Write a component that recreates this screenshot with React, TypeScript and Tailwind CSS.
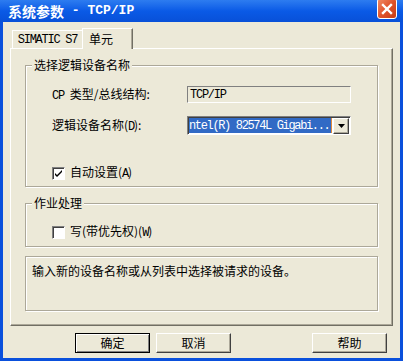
import React from 'react';

const CJK = '"Noto Sans CJK SC", "Liberation Sans", sans-serif';

// SimSun 的半角西文大约 6px 一个字
function M({ children, className = '' }: { children: React.ReactNode; className?: string }) {
  return (
    <span
      className={`text-[12px] tracking-[-1.25px] ${className}`}
      style={{ fontFamily: '"Liberation Mono", monospace' }}
    >
      {children}
    </span>
  );
}

function GroupBox({ title, className = '', children }: { title: string; className?: string; children?: React.ReactNode }) {
  return (
    <div
      className={`relative border border-[#aca899] shadow-[inset_1px_1px_0_#ffffff,1px_1px_0_#ffffff] ${className}`}
    >
      <span className="absolute -top-[9px] left-[6px] bg-[#ece9d8] px-[2px] text-[12px] leading-[16px] text-black">
        {title}
      </span>
      {children}
    </div>
  );
}

function CheckBox({ checked }: { checked?: boolean }) {
  return (
    <span className="flex h-[13px] w-[13px] items-center justify-center border border-t-[#808080] border-l-[#808080] border-r-[#ffffff] border-b-[#ffffff] bg-white shadow-[inset_1px_1px_0_#404040]">
      {checked && (
        <svg width="9" height="9" viewBox="0 0 9 9">
          <path d="M1 4 L3 6 L8 1 L8 3 L3 8 L1 6 Z" fill="#000" />
        </svg>
      )}
    </span>
  );
}

function Button({ children, isDefault }: { children: React.ReactNode; isDefault?: boolean }) {
  return (
    <div
      className={`flex h-[20px] w-[75px] items-center justify-center border text-[12px] text-black ${
        isDefault
          ? 'border-[#000000] shadow-[inset_1px_1px_0_#ffffff,inset_-1px_-1px_0_#808080]'
          : 'border-t-[#ffffff] border-l-[#ffffff] border-r-[#404040] border-b-[#404040] shadow-[inset_-1px_-1px_0_#aca899]'
      } bg-[#ece9d8]`}
    >
      {children}
    </div>
  );
}

export default function App() {
  return (
    <div className="h-[361px] w-[409px] overflow-hidden bg-white" style={{ fontFamily: CJK }}>
      <div className="flex h-[361px] w-[403px] flex-col bg-[#0a50dc]">
        {/* 标题栏 */}
        <div className="flex h-[22px] items-start bg-gradient-to-b from-[#2d7cf0] via-[#0a5ae6] to-[#0850d8] pl-[8px] pr-[6px]">
          <div className="flex h-[22px] flex-1 items-center whitespace-pre text-[14px] font-bold text-white">
            系统参数
            <span className="text-[13px]" style={{ fontFamily: '"Liberation Mono", monospace' }}>
              {' - TCP/IP'}
            </span>
          </div>
          <div className="-mt-[2px] flex h-[21px] w-[20px] items-center justify-center rounded-[3px] border border-white bg-gradient-to-br from-[#f08a64] via-[#e0532b] to-[#c83c14]">
            <svg width="12" height="12" viewBox="0 0 12 12">
              <path d="M2 2 L10 10 M10 2 L2 10" stroke="#fff" strokeWidth="2.4" strokeLinecap="square" />
            </svg>
          </div>
        </div>

        {/* 窗口内容 */}
        <div className="mx-[3px] mb-[3px] flex flex-1 flex-col bg-[#ece9d8] px-[7px]">
          {/* 选项卡 */}
          <div className="flex h-[26px] items-end pt-[6px] pl-[2px]">
            <div className="mb-0 flex h-[18px] w-[70px] items-center justify-center border-t border-l border-t-white border-l-white text-black">
              <M>SIMATIC S7</M>
            </div>
            <div className="relative z-10 -mb-[1px] flex h-[21px] w-[51px] items-center border-t border-l border-r border-t-white border-l-white border-r-[#716f64] bg-[#ece9d8] pl-[6px] text-[12px] text-black shadow-[inset_-1px_0_0_#aca899]">
              单元
            </div>
          </div>

          {/* 选项卡页面 */}
          <div className="flex h-[278px] flex-col border border-t-white border-l-white border-r-[#716f64] border-b-[#716f64] px-[14px] pt-[16px] shadow-[inset_-1px_-1px_0_#aca899]">
            <GroupBox title="选择逻辑设备名称" className="h-[122px]">
              <div className="flex flex-col pl-[26px] pt-[20px] text-[12px] text-black">
                <div className="flex h-[17px] items-center">
                  <div className="w-[135px] whitespace-pre">
                    <M>CP </M>类型/总线结构:
                  </div>
                  <div className="flex h-[17px] w-[164px] items-center border border-t-[#808080] border-l-[#808080] border-r-white border-b-white bg-[#ece9d8] pl-[2px]">
                    <M>TCP/IP</M>
                  </div>
                </div>
                <div className="mt-[13px] flex h-[19px] items-center">
                  <div className="w-[135px]">
                    逻辑设备名称(<M>D</M>):
                  </div>
                  <div className="flex h-[19px] w-[164px] items-center border border-t-[#808080] border-l-[#808080] border-r-white border-b-white bg-white p-[1px] shadow-[inset_1px_1px_0_#404040]">
                    <div className="flex h-[15px] min-w-0 flex-1 items-center overflow-hidden whitespace-nowrap bg-[#316ac5] text-white">
                      <M className="tracking-[-1.35px]">ntel(R) 82574L Gigabi...</M>
                    </div>
                    <div className="h-[15px] w-[1px] bg-[#e08a3a]" />
                    <div className="ml-[1px] flex h-[16px] w-[16px] items-center justify-center border border-t-white border-l-white border-r-[#404040] border-b-[#404040] bg-[#ece9d8] shadow-[inset_-1px_-1px_0_#aca899]">
                      <svg width="7" height="4" viewBox="0 0 7 4">
                        <path d="M0 0 H7 L3.5 4 Z" fill="#000" />
                      </svg>
                    </div>
                  </div>
                </div>
                <div className="mt-[28px] flex items-center gap-[5px]">
                  <CheckBox checked />
                  <span>
                    自动设置(<M>A</M>)
                  </span>
                </div>
              </div>
            </GroupBox>

            <GroupBox title="作业处理" className="mt-[16px] h-[44px]">
              <div className="flex items-center gap-[5px] pl-[26px] pt-[18px] text-[12px] text-black">
                <CheckBox />
                <span>
                  写(带优先权)(<M>W</M>)
                </span>
              </div>
            </GroupBox>

            <div className="mt-[9px] h-[55px] border border-[#aca899] pl-[6px] pt-[5px] text-[12px] text-black shadow-[inset_1px_1px_0_#ffffff,1px_1px_0_#ffffff]">
              输入新的设备名称或从列表中选择被请求的设备。
            </div>
          </div>

          {/* 按钮 */}
          <div className="mt-[7px] flex items-center pl-[65px] pr-[6px]">
            <Button isDefault>确定</Button>
            <div className="ml-[6px]">
              <Button>取消</Button>
            </div>
            <div className="ml-auto">
              <Button>帮助</Button>
            </div>
          </div>
        </div>
      </div>
    </div>
  );
}
